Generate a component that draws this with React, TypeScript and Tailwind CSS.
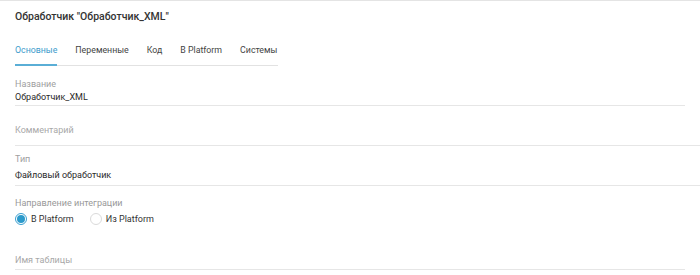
const tabs = ['Основные', 'Переменные', 'Код', 'В Platform', 'Системы'];

function Radio({ checked, label }: { checked?: boolean; label: string }) {
  return (
    <label className="flex h-[12px] items-center gap-[4px]">
      <span
        className={`flex h-[12px] w-[12px] items-center justify-center rounded-full border ${
          checked ? 'border-[#3a9fd0]' : 'border-[#dadada]'
        }`}
      >
        {checked && <span className="h-[8px] w-[8px] rounded-full bg-[#2c9acb]" />}
      </span>
      <span className="text-[9px] leading-[12px] text-[#333]">{label}</span>
    </label>
  );
}

export default function App() {
  return (
    <div
      className="h-[275px] w-[700px] overflow-hidden border-t border-[#e4e4e4] bg-white"
      style={{ fontFamily: 'Roboto, "Noto Sans", sans-serif' }}
    >
      <div className="pl-[15px]">
        <div className="pt-[9px] text-[10.5px] font-medium leading-[14px] text-[#333]">
          Обработчик "Обработчик_XML"
        </div>

        {/* tabs */}
        <div className="mt-[20px] flex w-[263px] gap-[18px] border-b border-[#e2e2e2]">
          {tabs.map((t, i) => (
            <div
              key={t}
              className={`-mb-px whitespace-nowrap pb-[8px] text-[8.8px] leading-[12px] ${
                i === 0 ? 'border-b-2 border-[#5aaed6] text-[#3d9ccc]' : 'border-b-2 border-transparent text-[#444]'
              }`}
            >
              {t}
            </div>
          ))}
        </div>

        {/* Название */}
        <div className="mr-[15px] border-b border-[#e6e6e6] pt-[12px] pb-[2px]">
          <div className="text-[9px] leading-[12px] text-[#a0a0a0]">Название</div>
          <div className="mt-px text-[9px] leading-[12px] text-[#2a2a2a]">Обработчик_XML</div>
        </div>

        {/* Комментарий */}
        <div className="border-b border-[#e6e6e6] pt-[18px] pb-[9px] text-[9px] leading-[12px] text-[#a8a8a8]">
          Комментарий
        </div>

        {/* Тип */}
        <div className="border-b border-[#e6e6e6] pt-[7px] pb-[4px]">
          <div className="text-[9px] leading-[12px] text-[#a0a0a0]">Тип</div>
          <div className="mt-[4px] text-[9px] leading-[12px] text-[#2a2a2a]">Файловый обработчик</div>
        </div>

        {/* Направление интеграции */}
        <div className="pt-[11px]">
          <div className="text-[9px] leading-[12px] text-[#999]">Направление интеграции</div>
          <div className="mt-[4px] flex gap-[16px]">
            <Radio checked label="В Platform" />
            <Radio label="Из Platform" />
          </div>
        </div>

        <div className="mr-[15px] mt-[29px] border-b border-[#e6e6e6] pb-[3px] text-[9px] leading-[12px] text-[#a8a8a8]">
          Имя таблицы
        </div>
      </div>
    </div>
  );
}
